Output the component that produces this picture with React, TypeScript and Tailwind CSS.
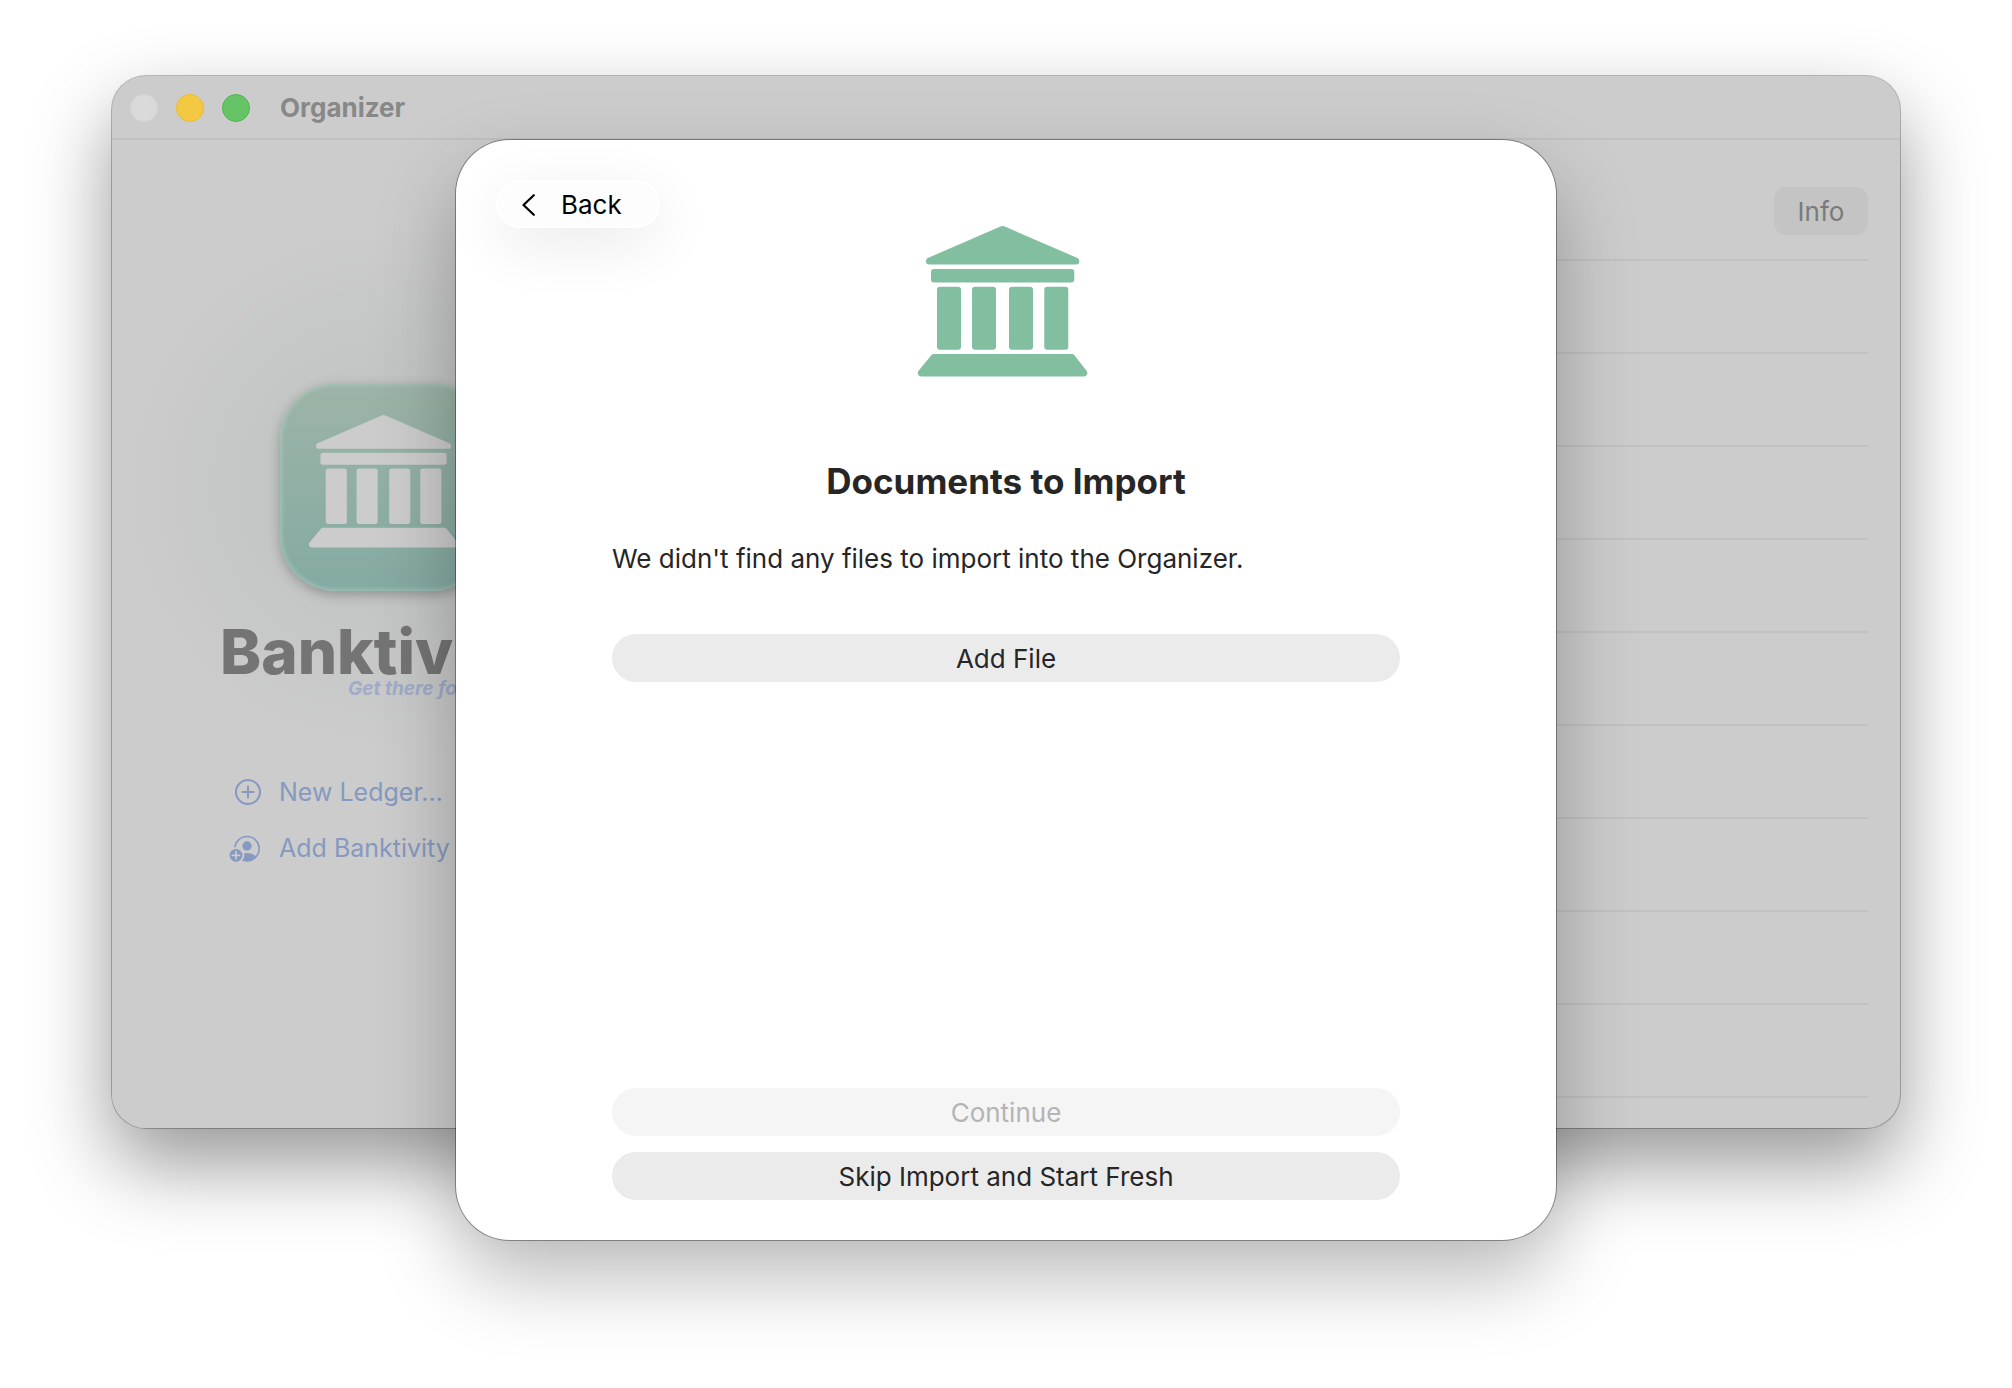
import { ReactNode } from "react";

const pillClass =
  "flex h-12 w-full items-center justify-center rounded-full pt-0.5 text-[26px] leading-8";

const ROWS = [1, 2, 3, 4, 5, 6, 7, 8, 9, 10];

function BankGlyph({ className }: { className?: string }) {
  return (
    <svg viewBox="0 0 176 151" className={className} fill="currentColor" aria-hidden="true">
      <path d="M82.5 .6a5 5 0 0 1 4.400 0L159.500 32a3.200 3.200 0 0 1 1.800 2.900v.5a3 3 0 0 1-3 3H11a3 3 0 0 1-3-3v-.5A3.200 3.200 0 0 1 9.800 32z" />
      <rect x="13" y="43" width="143.300" height="13.400" rx="3" />
      <rect x="19" y="60.700" width="24" height="63" rx="3" />
      <rect x="54" y="60.700" width="24" height="63" rx="3" />
      <rect x="91" y="60.700" width="24" height="63" rx="3" />
      <rect x="126.300" y="60.700" width="24" height="63" rx="3" />
      <path d="M15.800 128H153.800a3 3 0 0 1 2.400 1.100L168.500 144.800a3.400 3.400 0 0 1-2.700 5.600H3.200A3.400 3.400 0 0 1 .6 144.800L13.500 129.100a3 3 0 0 1 2.300-1.100z" />
    </svg>
  );
}

function PlusCircleIcon() {
  return (
    <svg
      viewBox="0 0 26 26"
      className="h-[26px] w-[26px]"
      fill="none"
      stroke="currentColor"
      strokeWidth="2"
      strokeLinecap="round"
      aria-hidden="true"
    >
      <circle cx="13" cy="13" r="12" />
      <path d="M13 7.500v11M7.500 13h11" />
    </svg>
  );
}

function AddPersonIcon() {
  return (
    <svg viewBox="0 0 96 81" className="h-[27px] w-8" aria-hidden="true">
      <defs>
        <clipPath id="person-clip">
          <circle cx="54" cy="41" r="38" />
        </clipPath>
      </defs>
      <circle cx="54" cy="41" r="36.500" fill="none" stroke="currentColor" strokeWidth="5" />
      <circle cx="54" cy="33" r="14" fill="currentColor" />
      <ellipse cx="54" cy="72" rx="29" ry="18" fill="currentColor" clipPath="url(#person-clip)" />
      <circle cx="21" cy="61" r="25" fill="#cccccc" />
      <circle cx="21" cy="61" r="19" fill="currentColor" />
      <path d="M21 50v22M10 61h22" stroke="#cccccc" strokeWidth="5" strokeLinecap="round" />
    </svg>
  );
}

function SidebarLink({ icon, children }: { icon: ReactNode; children: ReactNode }) {
  return (
    <a href="#" className="flex h-14 items-center gap-[18px] whitespace-nowrap text-[25px] leading-8 text-[#8699c1]">
      <span className="flex w-8 justify-end">{icon}</span>
      {children}
    </a>
  );
}

function TitleBar() {
  return (
    <header className="flex h-16 items-center border-b-2 border-[#c1c1c1] pl-[18px] pt-0.5">
      <div className="flex gap-[18px]">
        <button aria-label="Close" className="h-7 w-7 rounded-full border border-[#d6d6d6] bg-[#dadada]" />
        <button aria-label="Minimize" className="h-7 w-7 rounded-full border border-[#f0bb2c] bg-[#f3c944]" />
        <button aria-label="Zoom" className="h-7 w-7 rounded-full border border-[#4bb84d] bg-[#66c466]" />
      </div>
      <h1 className="ml-[30px] text-[26px] font-bold leading-8 text-[#888888]">Organizer</h1>
    </header>
  );
}

function Sidebar() {
  return (
    <aside className="flex w-[544px] shrink-0 flex-col items-center bg-[radial-gradient(circle_at_272px_347px,#c1c5c3_90px,#cccccc_270px)] pt-[243px]">
      <div className="h-52 w-52 rounded-[56px] bg-linear-to-b from-[#9db4a6] to-[#84aaa3] pl-[29px] pt-8 text-[#cccccc] shadow-[inset_0_0_4px_2px_rgba(190,225,210,0.4),0_4px_12px_rgba(0,0,0,0.25)]">
        <BankGlyph className="w-[155px]" />
      </div>
      <div className="mt-9 w-[328px]">
        <p className="text-[62px] font-extrabold leading-[50px] text-[#747474]">Banktivity</p>
        <p className="mt-0.5 pl-32 text-[19px] font-bold italic leading-5 text-[#9fabc9]">Get there for</p>
      </div>
      <nav className="mt-[65px] w-[310px]">
        <SidebarLink icon={<PlusCircleIcon />}>New Ledger…</SidebarLink>
        <SidebarLink icon={<AddPersonIcon />}>Add Banktivity</SidebarLink>
      </nav>
    </aside>
  );
}

function LedgerList() {
  return (
    <ul className="flex-1 px-8 pb-[30px] pt-7">
      {ROWS.map((row) => (
        <li key={row} className="flex h-[93px] items-center justify-end border-b-2 border-[#c1c1c1] pb-1.5">
          {row === 1 && (
            <button className="h-12 w-[94px] rounded-xl bg-[#c4c4c4] pt-0.5 text-[26px] leading-8 text-[#7a7a7a]">
              Info
            </button>
          )}
        </li>
      ))}
    </ul>
  );
}

function ImportDialog() {
  return (
    <div
      role="dialog"
      aria-labelledby="import-title"
      className="absolute inset-x-0 top-16 mx-auto max-w-[1100px] rounded-[54px] bg-white p-10 text-[#262626] shadow-[0_0_0_1px_rgba(0,0,0,0.35),0_36px_80px_rgba(0,0,0,0.28)]"
    >
      <div className="grid grid-cols-[1fr_176px_1fr]">
        <button className="flex h-12 w-[164px] items-center gap-[26px] rounded-full border-2 border-white bg-[#fdfdfd] pl-6 pt-0.5 text-[26px] leading-8 text-black shadow-[0_16px_60px_rgba(0,0,0,0.09)]">
          <svg
            viewBox="0 0 13 22"
            className="h-[22px] w-[13px]"
            fill="none"
            stroke="currentColor"
            strokeWidth="2.200"
            strokeLinecap="round"
            strokeLinejoin="round"
            aria-hidden="true"
          >
            <path d="M11.800 1.200 1.500 11l10.300 9.800" />
          </svg>
          Back
        </button>
        <BankGlyph className="mt-[46px] w-44 text-[#82bea0]" />
      </div>
      <div className="px-[116px]">
        <h2 id="import-title" className="mt-[84px] text-center text-[35px] font-bold leading-10">
          Documents to Import
        </h2>
        <p className="mt-[42px] text-[26px] leading-8">We didn't find any files to import into the Organizer.</p>
        <button className={`${pillClass} mt-[59px] bg-[#ebebeb]`}>Add File</button>
        <div className="mt-[406px] space-y-4">
          <button disabled className={`${pillClass} bg-[#f5f5f5] text-[#b4b4b4]`}>
            Continue
          </button>
          <button className={`${pillClass} bg-[#ebebeb]`}>Skip Import and Start Fresh</button>
        </div>
      </div>
    </div>
  );
}

export default function App() {
  return (
    <div className="min-h-screen overflow-hidden bg-white px-28 pb-[260px] pt-[76px] font-['Inter',sans-serif]">
      <main className="relative">
        <div className="rounded-[34px] bg-[#cccccc] shadow-[0_0_0_1px_rgba(0,0,0,0.25),0_36px_80px_rgba(0,0,0,0.41)]">
          <TitleBar />
          <div className="flex overflow-hidden rounded-b-[34px]">
            <Sidebar />
            <LedgerList />
          </div>
        </div>
        <ImportDialog />
      </main>
    </div>
  );
}
